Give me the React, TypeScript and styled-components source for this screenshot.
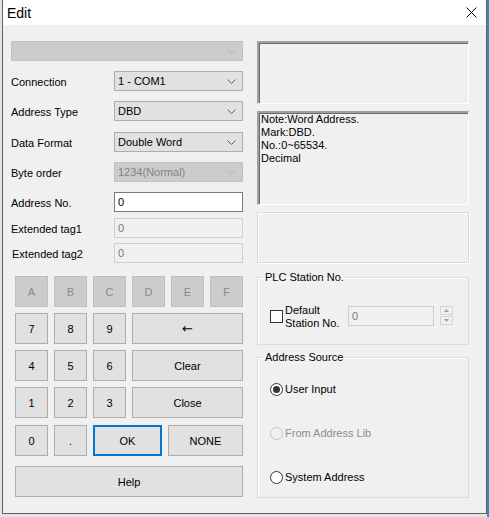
import styled, { createGlobalStyle } from "styled-components";

const GlobalStyle = createGlobalStyle`
  html, body {
    margin: 0;
    padding: 0;
  }
  body {
    font-family: "Liberation Sans", Arial, sans-serif;
    font-size: 11px;
    color: #000;
  }
  * {
    box-sizing: border-box;
  }
`;

const Screen = styled.div`
  width: 489px;
  height: 517px;
  padding-left: 2px;
  overflow: hidden;
  background: linear-gradient(to right, #e4e4e4 0 487px, #2b8fbe 487px);
`;

const Window = styled.div`
  width: 485px;
  height: 514px;
  display: flex;
  flex-direction: column;
  background: #f0f0f0;
  border: 1px solid #626262;
  border-top: none;
`;

const TitleBar = styled.div`
  height: 25px;
  flex: none;
  display: flex;
  align-items: center;
  justify-content: space-between;
  padding: 0 9px 0 4px;
  background: #fff;
  font-size: 14px;
`;

const CloseButton = styled.div`
  width: 12px;
  height: 12px;
  display: flex;
  align-items: center;
  justify-content: center;
`;

const Body = styled.div`
  display: flex;
  gap: 14px;
  padding: 16px 0 0 8px;
`;

const LeftColumn = styled.div`
  width: 232px;
  display: flex;
  flex-direction: column;
`;

const RightColumn = styled.div`
  width: 212px;
  display: flex;
  flex-direction: column;
`;

const FieldRow = styled.div<{ $gap: number }>`
  display: flex;
  align-items: center;
  height: 20px;
  margin-top: ${(p) => p.$gap}px;
`;

const Label = styled.div<{ $shift?: number }>`
  width: 103px;
  padding-left: ${(p) => p.$shift ?? 0}px;
  padding-top: 2px;
  white-space: nowrap;
`;

const SelectBox = styled.div<{ $disabled?: boolean; $full?: boolean }>`
  width: ${(p) => (p.$full ? "232px" : "129px")};
  height: 20px;
  display: flex;
  align-items: center;
  justify-content: space-between;
  padding: 0 6px 0 3px;
  background: ${(p) => (p.$disabled ? "#cccccc" : "#e1e1e1")};
  border: 1px solid ${(p) => (p.$disabled ? "#c2c2c2" : "#adadad")};
  color: ${(p) => (p.$disabled ? "#838383" : "#000")};
`;

const TextInput = styled.div<{ $disabled?: boolean }>`
  width: 129px;
  height: 20px;
  display: flex;
  align-items: center;
  padding-left: 3px;
  background: ${(p) => (p.$disabled ? "#f0f0f0" : "#fff")};
  border: 1px solid ${(p) => (p.$disabled ? "#cfcfcf" : "#7a7a7a")};
  color: ${(p) => (p.$disabled ? "#7a7a7a" : "#000")};
`;

const Keypad = styled.div`
  display: grid;
  grid-template-columns: repeat(6, 33px);
  grid-auto-rows: 31px;
  gap: 6px;
  margin: 13px 0 0 4px;
`;

const KeyRow = styled.div`
  display: flex;
  gap: 6px;
  height: 31px;
  margin: 7px 0 0 4px;
`;

const Key = styled.button<{ $state?: "disabled" | "focus"; $span?: number; $width?: number }>`
  grid-column: span ${(p) => p.$span ?? 1};
  width: ${(p) => (p.$width ? `${p.$width}px` : "auto")};
  height: 31px;
  margin: 0;
  padding: 0;
  font-family: inherit;
  font-size: 11px;
  background: ${(p) => (p.$state === "disabled" ? "#cccccc" : "#e1e1e1")};
  color: ${(p) => (p.$state === "disabled" ? "#8a8a8a" : "#000")};
  border: ${(p) =>
    p.$state === "focus"
      ? "2px solid #0078d7"
      : p.$state === "disabled"
      ? "1px solid #bfbfbf"
      : "1px solid #adadad"};
`;

const ArrowGlyph = styled.span`
  font-family: "DejaVu Sans", sans-serif;
  font-size: 13px;
`;

const HelpKey = styled(Key)`
  width: 228px;
  margin: 10px 0 0 4px;
`;

const SunkenBox = styled.div<{ $height: number; $gap: number }>`
  height: ${(p) => p.$height}px;
  margin-top: ${(p) => p.$gap}px;
  border-top: 2px solid #a0a0a0;
  border-left: 2px solid #a0a0a0;
  border-right: 1px solid #fff;
  border-bottom: 1px solid #fff;
  box-shadow: inset 1px 1px 0 #696969;
  padding: 0 2px;
  line-height: 13px;
`;

const EtchedBox = styled.div<{ $height: number; $gap: number }>`
  height: ${(p) => p.$height}px;
  margin-top: ${(p) => p.$gap}px;
  border: 1px solid #d9d9d9;
  box-shadow: inset 1px 1px 0 #fff, 1px 1px 0 #fff;
`;

const Group = styled.fieldset<{ $gap: number }>`
  margin: ${(p) => p.$gap}px 0 0 0;
  padding: 0 12px;
  min-width: 0;
  border: 1px solid #dcdcdc;
  box-shadow: inset 1px 1px 0 #fff;
  display: flex;
  flex-direction: column;
`;

const Legend = styled.legend`
  margin-left: -7px;
  padding: 0 2px;
  line-height: 14px;
`;

const StationRow = styled.div`
  display: flex;
  align-items: center;
  height: 20px;
  margin: 21px 0 19px;
`;

const CheckBox = styled.div`
  width: 13px;
  height: 13px;
  margin-top: 3px;
  border: 1px solid #333;
  background: #fff;
  flex: none;
`;

const CheckLabel = styled.div`
  width: 63px;
  margin-left: 2px;
  line-height: 13px;
  padding-top: 4px;
`;

const StationInput = styled(TextInput)`
  width: 86px;
  height: 20px;
  margin-top: 1px;
`;

const Spinner = styled.div`
  width: 13px;
  height: 19px;
  margin: 1px 0 0 6px;
  display: flex;
  flex-direction: column;
  gap: 1px;
`;

const SpinButton = styled.div`
  flex: 1;
  display: flex;
  align-items: center;
  justify-content: center;
  border: 1px solid #d6d6d6;
  background: #f0f0f0;
`;

const RadioList = styled.div`
  display: flex;
  flex-direction: column;
  gap: 30px;
  padding: 18px 0 13px;
`;

const RadioRow = styled.div<{ $disabled?: boolean }>`
  display: flex;
  align-items: center;
  height: 14px;
  gap: 2px;
  color: ${(p) => (p.$disabled ? "#8d8d8d" : "#000")};
`;

const RadioCircle = styled.div<{ $checked?: boolean; $disabled?: boolean }>`
  width: 13px;
  height: 13px;
  border-radius: 50%;
  border: 1px solid ${(p) => (p.$disabled ? "#c4c4c4" : "#333")};
  background: ${(p) => (p.$disabled ? "#f0f0f0" : "#fff")};
  display: flex;
  align-items: center;
  justify-content: center;
  &::after {
    content: "";
    display: ${(p) => (p.$checked ? "block" : "none")};
    width: 7px;
    height: 7px;
    border-radius: 50%;
    background: #333;
  }
`;

function Chevron({ disabled }: { disabled?: boolean }) {
  return (
    <svg width="9" height="5" viewBox="0 0 9 5">
      <polyline
        points="0.5,0.5 4.5,4.5 8.5,0.5"
        fill="none"
        stroke={disabled ? "#b4b4b4" : "#606060"}
        strokeWidth="1"
      />
    </svg>
  );
}

function Select({ value, disabled, full }: { value?: string; disabled?: boolean; full?: boolean }) {
  return (
    <SelectBox $disabled={disabled} $full={full}>
      <span>{value}</span>
      <Chevron disabled={disabled} />
    </SelectBox>
  );
}

export default function App() {
  return (
    <>
      <GlobalStyle />
      <Screen>
        <Window>
          <TitleBar>
            <span>Edit</span>
            <CloseButton>
              <svg width="11" height="11" viewBox="0 0 11 11">
                <path d="M0.5 0.5 L10.5 10.5 M10.5 0.5 L0.5 10.5" stroke="#000" strokeWidth="1" />
              </svg>
            </CloseButton>
          </TitleBar>
          <Body>
            <LeftColumn>
              <FieldRow $gap={0}>
                <Select disabled full />
              </FieldRow>
              <FieldRow $gap={10}>
                <Label>Connection</Label>
                <Select value="1 - COM1" />
              </FieldRow>
              <FieldRow $gap={10}>
                <Label>Address Type</Label>
                <Select value="DBD" />
              </FieldRow>
              <FieldRow $gap={11}>
                <Label>Data Format</Label>
                <Select value="Double Word" />
              </FieldRow>
              <FieldRow $gap={10}>
                <Label>Byte order</Label>
                <Select value="1234(Normal)" disabled />
              </FieldRow>
              <FieldRow $gap={10}>
                <Label>Address No.</Label>
                <TextInput>0</TextInput>
              </FieldRow>
              <FieldRow $gap={6}>
                <Label>Extended tag1</Label>
                <TextInput $disabled>0</TextInput>
              </FieldRow>
              <FieldRow $gap={5}>
                <Label $shift={1}>Extended tag2</Label>
                <TextInput $disabled>0</TextInput>
              </FieldRow>

              <Keypad>
                {["A", "B", "C", "D", "E", "F"].map((k) => (
                  <Key key={k} $state="disabled">
                    {k}
                  </Key>
                ))}
                <Key>7</Key>
                <Key>8</Key>
                <Key>9</Key>
                <Key $span={3}>
                  <ArrowGlyph>←</ArrowGlyph>
                </Key>
                <Key>4</Key>
                <Key>5</Key>
                <Key>6</Key>
                <Key $span={3}>Clear</Key>
                <Key>1</Key>
                <Key>2</Key>
                <Key>3</Key>
                <Key $span={3}>Close</Key>
              </Keypad>
              <KeyRow>
                <Key $width={33}>0</Key>
                <Key $width={33}>.</Key>
                <Key $width={69} $state="focus">
                  OK
                </Key>
                <Key $width={75}>NONE</Key>
              </KeyRow>
              <HelpKey>Help</HelpKey>
            </LeftColumn>

            <RightColumn>
              <SunkenBox $height={63} $gap={0} />
              <SunkenBox $height={94} $gap={7}>
                Note:Word Address.
                <br />
                Mark:DBD.
                <br />
                No.:0~65534.
                <br />
                Decimal
              </SunkenBox>
              <EtchedBox $height={51} $gap={7} />

              <Group $gap={7}>
                <Legend>PLC Station No.</Legend>
                <StationRow>
                  <CheckBox />
                  <CheckLabel>
                    Default
                    <br />
                    Station No.
                  </CheckLabel>
                  <StationInput $disabled>0</StationInput>
                  <Spinner>
                    <SpinButton>
                      <svg width="5" height="3" viewBox="0 0 5 3">
                        <polygon points="0,3 2.5,0 5,3" fill="#a0a0a0" />
                      </svg>
                    </SpinButton>
                    <SpinButton>
                      <svg width="5" height="3" viewBox="0 0 5 3">
                        <polygon points="0,0 2.5,3 5,0" fill="#a0a0a0" />
                      </svg>
                    </SpinButton>
                  </Spinner>
                </StationRow>
              </Group>

              <Group $gap={5}>
                <Legend>Address Source</Legend>
                <RadioList>
                  <RadioRow>
                    <RadioCircle $checked />
                    User Input
                  </RadioRow>
                  <RadioRow $disabled>
                    <RadioCircle $disabled />
                    From Address Lib
                  </RadioRow>
                  <RadioRow>
                    <RadioCircle />
                    System Address
                  </RadioRow>
                </RadioList>
              </Group>
            </RightColumn>
          </Body>
        </Window>
      </Screen>
    </>
  );
}
